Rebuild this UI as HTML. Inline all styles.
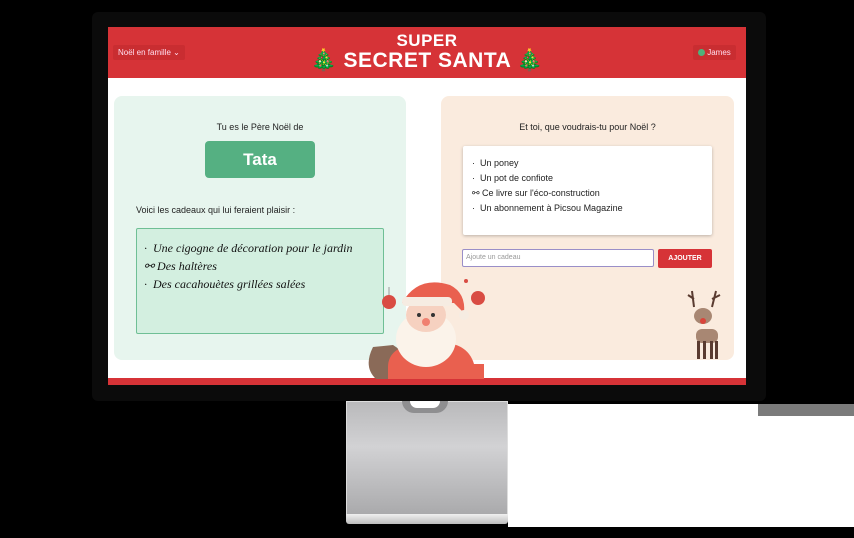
<!DOCTYPE html>
<html><head><meta charset="utf-8"><style>
*{margin:0;padding:0;box-sizing:border-box}
body{width:854px;height:538px;background:#000;position:relative;overflow:hidden;font-family:"Liberation Sans",sans-serif}
.abs{position:absolute}
.white{left:508px;top:404px;width:346px;height:123px;background:#fff}
.gbar{left:758px;top:404px;width:96px;height:12px;background:#7b7b7b}
.bezel{left:92px;top:12px;width:674px;height:389px;background:#0b0b0b;border-radius:6px}
.screen{left:108px;top:27px;width:638px;height:358px;background:#fff;overflow:hidden}
.hdr{left:0;top:0;width:638px;height:51px;background:#d63337}
.pill{background:#c92d31;color:#fbe;font-size:8px;color:#fde;padding:3px 5px;border-radius:2px}
.title{color:#fff;font-weight:900;text-align:center;width:638px;left:0;letter-spacing:0.5px}
.panel{border-radius:8px}
.hand{font-family:"Liberation Serif",serif;font-style:italic;font-size:12px;color:#111}
.lst{font-size:9px;color:#222}
.stand{left:346px;top:401px;width:162px;height:114px;background:linear-gradient(#b9b9bb,#d2d2d4 40%,#aaaaac);border:1px solid #ddd}
.foot{left:346px;top:514px;width:162px;height:10px;background:linear-gradient(#f0f0f0,#bdbdbd);border-radius:0 0 3px 3px}
</style></head><body>
<div class="abs white"></div><div class="abs gbar"></div>
<div class="abs bezel"></div>
<div class="abs stand"></div>
<div class="abs" style="left:402px;top:401px;width:46px;height:12px;background:#8e8e90;border-radius:0 0 23px 23px"></div>
<div class="abs" style="left:410px;top:401px;width:30px;height:7px;background:#fff;border-radius:0 0 15px 15px"></div>
<div class="abs foot"></div>
<div class="abs screen">
 <div class="abs hdr"></div>
 <div class="abs pill" style="left:5px;top:18px">Noël en famille ⌄</div>
 <div class="abs pill" style="left:585px;top:18px"><span style="display:inline-block;width:7px;height:7px;border-radius:50%;background:#4fb07a;vertical-align:-1px"></span> James</div>
 <div class="abs title" style="top:4px;font-size:17px">SUPER</div>
 <div class="abs title" style="top:22px;font-size:21px">🎄 SECRET SANTA 🎄</div>
 <div class="abs" style="left:0;top:351px;width:638px;height:7px;background:#d63337"></div>

 <div class="abs panel" style="left:6px;top:69px;width:292px;height:264px;background:#e7f5ee"></div>
 <div class="abs" style="left:6px;top:95px;width:292px;text-align:center;font-size:9px;color:#222">Tu es le Père Noël de</div>
 <div class="abs" style="left:97px;top:114px;width:110px;height:37px;background:#55b082;border-radius:4px;color:#fff;font-weight:900;font-size:17px;text-align:center;line-height:37px">Tata</div>
 <div class="abs" style="left:28px;top:178px;font-size:9px;color:#222">Voici les cadeaux qui lui feraient plaisir :</div>
 <div class="abs" style="left:28px;top:201px;width:248px;height:106px;background:#d3efe0;border:1.5px solid #6fbf95;border-radius:2px"></div>
 <div class="abs hand" style="left:36px;top:212px;line-height:18px">·&nbsp; Une cigogne de décoration pour le jardin<br>⚯ Des haltères<br>·&nbsp; Des cacahouètes grillées salées</div>

 <div class="abs panel" style="left:333px;top:69px;width:293px;height:264px;background:#faebde"></div>
 <div class="abs" style="left:333px;top:95px;width:293px;text-align:center;font-size:9px;color:#222">Et toi, que voudrais-tu pour Noël ?</div>
 <div class="abs" style="left:355px;top:119px;width:249px;height:89px;background:#fff;box-shadow:0 1px 3px rgba(0,0,0,.25);border-radius:2px"></div>
 <div class="abs lst" style="left:364px;top:129px;line-height:15px">·&nbsp; Un poney<br>·&nbsp; Un pot de confiote<br>⚯ Ce livre sur l'éco-construction<br>·&nbsp; Un abonnement à Picsou Magazine</div>
 <div class="abs" style="left:354px;top:222px;width:192px;height:18px;border:1px solid #9a8fc8;border-radius:2px;background:#fff;font-size:7px;color:#999;padding:4px 3px">Ajoute un cadeau</div>
 <div class="abs" style="left:550px;top:222px;width:54px;height:19px;background:#d63337;border-radius:2px;color:#fff;font-size:7px;font-weight:bold;text-align:center;line-height:19px">AJOUTER</div>

 <svg class="abs" style="left:250px;top:240px" width="140" height="118" viewBox="0 0 140 118">
  <circle cx="31" cy="35" r="7" fill="#d94c43"/><line x1="31" y1="20" x2="31" y2="28" stroke="#999"/>
  <circle cx="120" cy="31" r="7" fill="#d94c43"/><circle cx="108" cy="14" r="2" fill="#d94c43"/>
  <path d="M15 80 Q5 100 18 112 L50 112 Q52 88 35 78 Z" fill="#8a6a58"/>
  <path d="M30 100 Q30 80 60 76 L90 76 Q118 80 118 112 L30 112 Z" fill="#e9604f"/>
  <ellipse cx="68" cy="72" rx="30" ry="28" fill="#fbf3ea"/>
  <ellipse cx="68" cy="48" rx="20" ry="17" fill="#f6d1c0"/>
  <circle cx="61" cy="48" r="2" fill="#333"/><circle cx="75" cy="48" r="2" fill="#333"/>
  <circle cx="68" cy="55" r="4" fill="#f08070"/>
  <path d="M44 36 Q60 8 92 18 Q108 26 106 46 L96 36 Z" fill="#e9604f"/>
  <rect x="44" y="30" width="50" height="9" rx="4" fill="#f6ece2"/>
  <circle cx="106" cy="48" r="5" fill="#f6ece2"/>
  <rect x="110" y="97" width="16" height="15" fill="#e9604f"/>
 </svg>
 <svg class="abs" style="left:574px;top:262px" width="44" height="72" viewBox="0 0 44 72">
  <path d="M10 2 L12 18 M6 6 L12 10 M34 2 L30 18 M38 6 L30 10" stroke="#5a3b30" stroke-width="2"/>
  <ellipse cx="21" cy="27" rx="9" ry="8" fill="#a88773"/>
  <circle cx="21" cy="32" r="3" fill="#d9443a"/>
  <rect x="14" y="40" width="22" height="14" rx="6" fill="#a88773"/>
  <rect x="15" y="52" width="3" height="18" fill="#5a3b30"/><rect x="21" y="52" width="3" height="18" fill="#5a3b30"/>
  <rect x="28" y="52" width="3" height="18" fill="#5a3b30"/><rect x="33" y="52" width="3" height="18" fill="#5a3b30"/>
 </svg>
</div>
</body></html>
